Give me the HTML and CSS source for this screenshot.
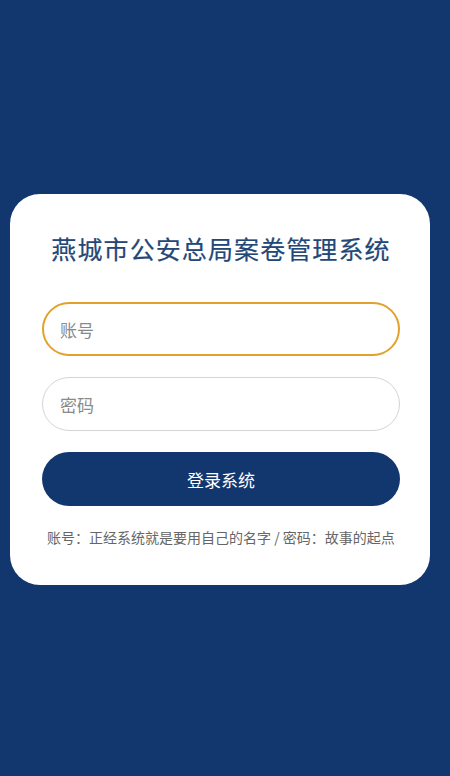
FILE: index.html
```html
<!DOCTYPE html>
<html lang="zh-CN">
  <head>
    <meta charset="UTF-8" />
    <meta name="viewport" content="width=device-width, initial-scale=1.0" />
    <title>燕城市公安总局案卷管理系统</title>
    <link rel="stylesheet" href="styles.css">
  </head>
  <body>
    <div id="page">
      <div class="card">
        <h1 class="title">燕城市公安总局案卷管理系统</h1>
        <form class="login-form" onsubmit="return false">
          <input class="field field-active" type="text" placeholder="账号" />
          <input class="field" type="password" placeholder="密码" />
          <button class="login-btn" type="submit">登录系统</button>
        </form>
        <p class="hint">账号：正经系统就是要用自己的名字 / 密码：故事的起点</p>
      </div>
    </div>
  </body>
</html>
```

FILE: styles.css
```css
html,
body {
  margin: 0;
  padding: 0;
  height: 100%;
  background-color: #12376f;
  font-family: "Noto Sans CJK SC", "Noto Sans", sans-serif;
}

#page {
  display: flex;
  flex-direction: column;
  padding-top: 194px;
  padding-left: 10px;
}

.card {
  width: 420px;
  box-sizing: border-box;
  background-color: #ffffff;
  border-radius: 30px;
  padding: 35px 30px 38px 32px;
  display: flex;
  flex-direction: column;
}

.title {
  margin: 0;
  font-size: 25px;
  line-height: 38px;
  font-weight: 400;
  letter-spacing: 1.1px;
  color: #234878;
  text-align: center;
  -webkit-text-stroke: 0.2px #234878;
}

.login-form {
  display: flex;
  flex-direction: column;
  gap: 21px;
  margin-top: 35px;
}

.field {
  height: 54px;
  box-sizing: border-box;
  border: 1px solid #d4d4d4;
  border-radius: 27px;
  padding: 0 17px;
  font-family: inherit;
  font-size: 17px;
  color: #333;
  outline: none;
  background: #fff;
}

.field::placeholder {
  color: #8a8a8a;
}

.field-active {
  border: 2px solid #e2a12a;
  padding: 0 16px;
}

.login-btn {
  height: 54px;
  border: none;
  border-radius: 27px;
  background-color: #12376f;
  color: #ffffff;
  font-family: inherit;
  font-size: 17px;
  cursor: pointer;
}

.hint {
  margin: 21px 0 0;
  font-size: 14px;
  line-height: 20px;
  color: #666666;
  text-align: center;
  white-space: nowrap;
}
```
